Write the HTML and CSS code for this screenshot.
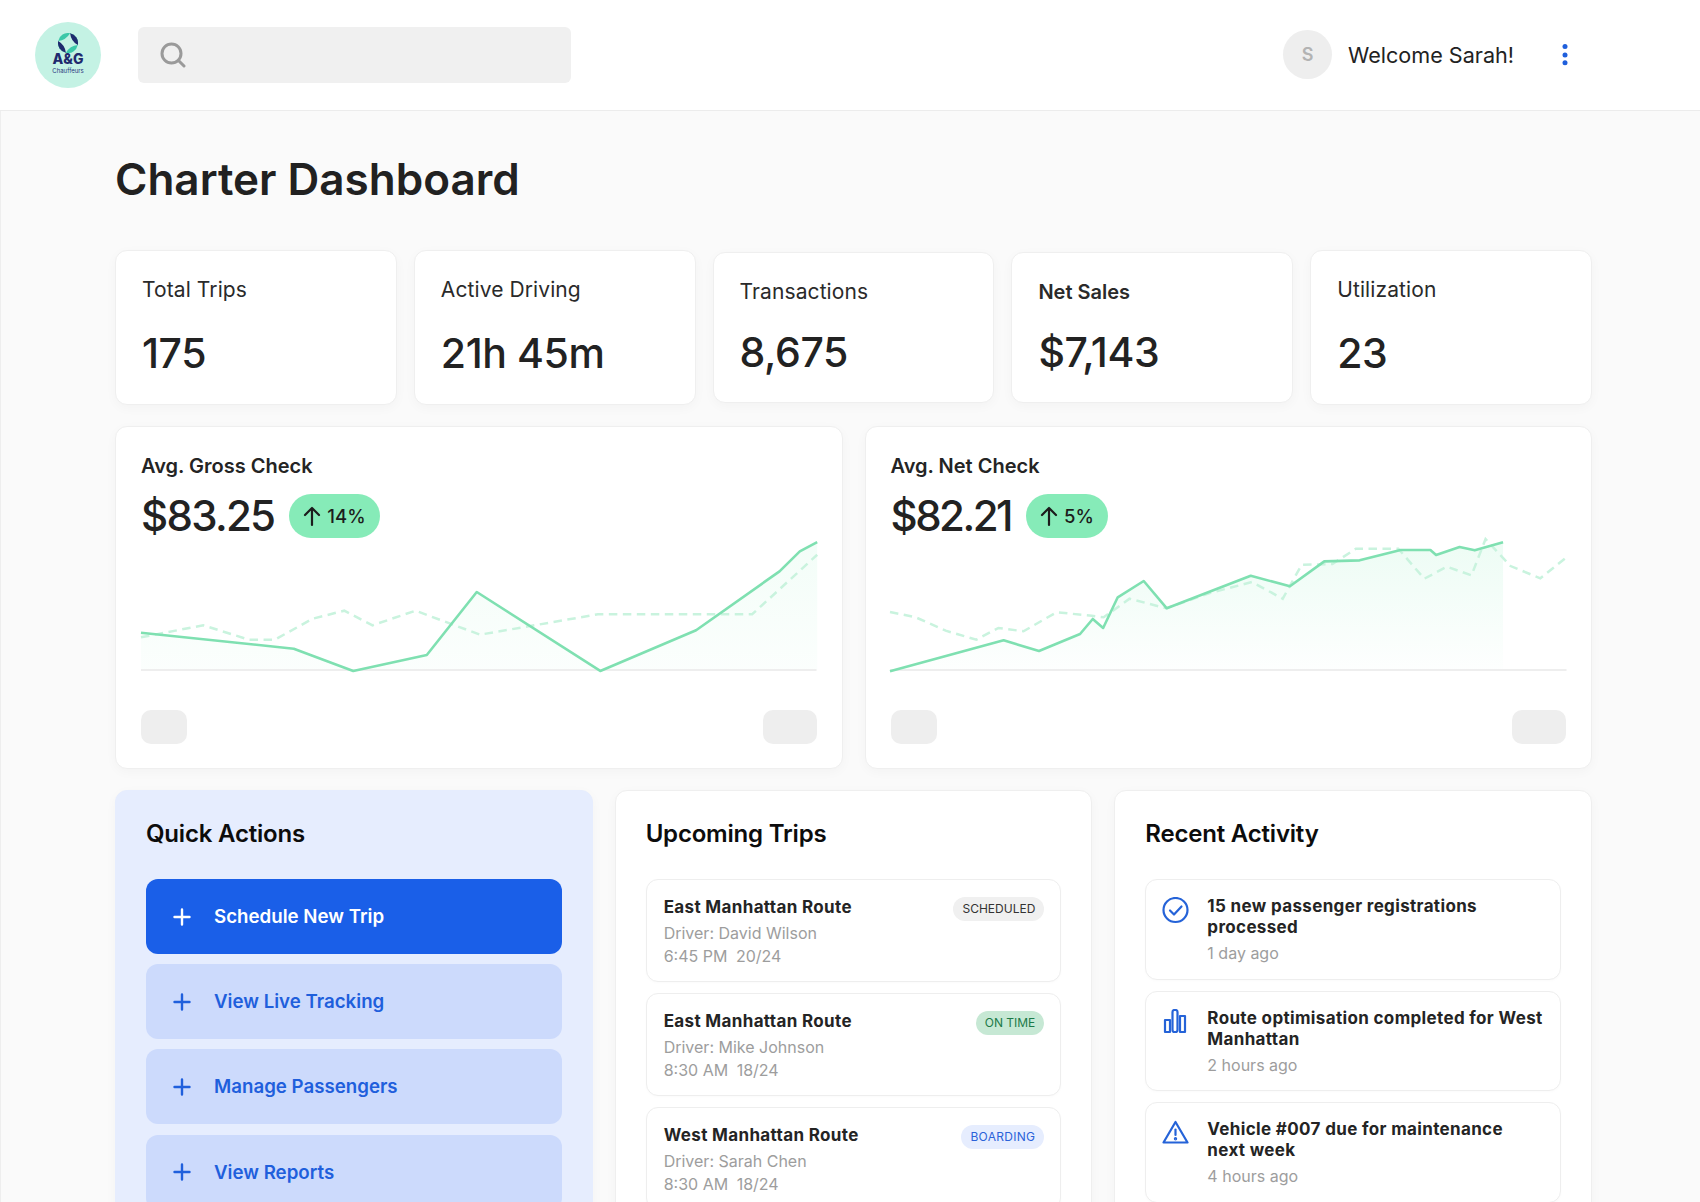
FILE: index.html
```html
<!DOCTYPE html>
<html lang="en">
<head>
<meta charset="utf-8">
<title>Charter Dashboard</title>
<link rel="stylesheet" href="styles.css">
</head>
<body>
<header class="topbar">
  <div class="logo">
    <svg class="logo-mark" viewBox="0 0 20 20" aria-hidden="true">
      <g transform="rotate(12 10 10)">
        <circle cx="10" cy="10" r="10" fill="#3cc8a8"/>
        <path d="M10 0A10 10 0 0 1 20 10H10Z" fill="#1f2a6e"/>
        <path d="M10 20A10 10 0 0 1 0 10H10Z" fill="#1f2a6e"/>
        <path d="M10 0Q12.500 7.500 20 10Q12.500 12.500 10 20Q7.500 12.500 0 10Q7.500 7.500 10 0Z" fill="#c4f2e4"/>
      </g>
    </svg>
    <span class="logo-name">A&amp;G</span>
    <span class="logo-sub">Chauffeurs</span>
  </div>
  <div class="search">
    <svg class="search-icon" viewBox="0 0 26 26" fill="none" stroke="#9a9a9a" stroke-width="3" stroke-linecap="round" aria-hidden="true"><circle cx="11.500" cy="11.500" r="9.500"/><path d="M18.500 18.500L24 24"/></svg>
  </div>
  <div class="user">
    <div class="avatar">S</div>
    <span class="welcome">Welcome Sarah!</span>
    <svg class="dots" viewBox="0 0 6 24" fill="#1f5fdc" aria-hidden="true"><circle cx="3" cy="3.500" r="2.500"/><circle cx="3" cy="12" r="2.500"/><circle cx="3" cy="19.800" r="2.500"/></svg>
  </div>
</header>

<main class="page">
  <h1 class="page-title">Charter Dashboard</h1>

  <section class="stats">
    <article class="stat"><div class="stat-label">Total Trips</div><div class="stat-value">175</div></article>
    <article class="stat"><div class="stat-label">Active Driving</div><div class="stat-value">21h 45m</div></article>
    <article class="stat stat-compact"><div class="stat-label">Transactions</div><div class="stat-value">8,675</div></article>
    <article class="stat stat-compact"><div class="stat-label stat-label-strong">Net Sales</div><div class="stat-value">$7,143</div></article>
    <article class="stat"><div class="stat-label">Utilization</div><div class="stat-value">23</div></article>
  </section>

  <section class="charts">
    <article class="chart-card">
      <div class="chart-label">Avg. Gross Check</div>
      <div class="chart-head">
        <span class="chart-value">$83.25</span>
        <span class="trend">
          <svg class="trend-arrow" viewBox="0 0 18 22" fill="none" stroke="#1c1c1c" stroke-width="2.200" stroke-linecap="round" stroke-linejoin="round" aria-hidden="true"><path d="M9 20V3M2 10l7-7 7 7"/></svg>14%
        </span>
      </div>
      <svg class="spark" viewBox="0 0 676 140" aria-hidden="true">
        <defs><linearGradient id="fadeA" x1="0" y1="0" x2="0" y2="1"><stop offset="0" stop-color="#86ebb8" stop-opacity=".1"/><stop offset="1" stop-color="#86ebb8" stop-opacity=".03"/></linearGradient></defs>
        <path d="M0 94.700L152.900 110.700L212.400 133L286 117L336 54L459.600 133L555.500 92.300L639 33.300L659.300 13.300L676.700 4V132H0Z" fill="url(#fadeA)"/>
        <path class="spark-base" d="M0 132H676"/>
        <path class="spark-dash" d="M0 99.300L62.300 87.300L108 101.700L134 101.700L171.800 80.700L203.400 72.700L231.700 87.300L274.700 72.700L339.300 96.700L457.300 76.300L611.600 76.300L676.700 16.700"/>
        <path class="spark-line" d="M0 94.700L152.900 110.700L212.400 133L286 117L336 54L459.600 133L555.500 92.300L639 33.300L659.300 13.300L676.700 4"/>
      </svg>
      <div class="chart-foot"><span class="skeleton skeleton-s"></span><span class="skeleton skeleton-l"></span></div>
    </article>

    <article class="chart-card">
      <div class="chart-label">Avg. Net Check</div>
      <div class="chart-head">
        <span class="chart-value chart-value-tight">$82.21</span>
        <span class="trend">
          <svg class="trend-arrow" viewBox="0 0 18 22" fill="none" stroke="#1c1c1c" stroke-width="2.200" stroke-linecap="round" stroke-linejoin="round" aria-hidden="true"><path d="M9 20V3M2 10l7-7 7 7"/></svg>5%
        </span>
      </div>
      <svg class="spark" viewBox="1 0 676 140" aria-hidden="true">
        <defs><linearGradient id="fadeB" x1="0" y1="0" x2="0" y2="1"><stop offset="0" stop-color="#86ebb8" stop-opacity=".15"/><stop offset="1" stop-color="#86ebb8" stop-opacity=".01"/></linearGradient></defs>
        <path d="M0 133.300L113.700 102.300L149.100 113L190.200 96L202.900 81L213.300 90L227.900 59.300L253.900 43L277 70.300L361 37.700L400.200 48.300L434.600 23.300L470 22.300L511 12L540.800 12L546.500 17L570 9L585.200 12.300L613.500 4.300V132H0Z" fill="url(#fadeB)"/>
        <path class="spark-base" d="M0 132H677"/>
        <path class="spark-dash" d="M0 74L25 79L55.700 92.700L86.400 101.700L108.500 90L133.600 93.300L166.600 74.300L202 77.700L213.800 79.300L239.700 60.700L276.500 70.300L320 55L362.300 44L393 60.700L412 26.700L442.700 26L466.200 10.700L508.700 10.700L534.700 40.700L557.300 28.700L581.900 37.300L596 1L621 28L650.800 40.300L677 19.300"/>
        <path class="spark-line" d="M0 133.300L113.700 102.300L149.100 113L190.200 96L202.900 81L213.300 90L227.900 59.300L253.900 43L277 70.300L361 37.700L400.200 48.300L434.600 23.300L470 22.300L511 12L540.800 12L546.500 17L570 9L585.200 12.300L613.500 4.300"/>
      </svg>
      <div class="chart-foot"><span class="skeleton skeleton-s"></span><span class="skeleton skeleton-l"></span></div>
    </article>
  </section>

  <section class="panels">
    <article class="panel panel-actions">
      <h2 class="panel-title">Quick Actions</h2>
      <div class="action-list">
        <div class="action action-primary"><svg class="plus" viewBox="0 0 18 18" aria-hidden="true"><path d="M9 1.500V16.500M1.500 9H16.500"/></svg>Schedule New Trip</div>
        <div class="action"><svg class="plus" viewBox="0 0 18 18" aria-hidden="true"><path d="M9 1.500V16.500M1.500 9H16.500"/></svg>View Live Tracking</div>
        <div class="action"><svg class="plus" viewBox="0 0 18 18" aria-hidden="true"><path d="M9 1.500V16.500M1.500 9H16.500"/></svg>Manage Passengers</div>
        <div class="action"><svg class="plus" viewBox="0 0 18 18" aria-hidden="true"><path d="M9 1.500V16.500M1.500 9H16.500"/></svg>View Reports</div>
      </div>
    </article>

    <article class="panel">
      <h2 class="panel-title">Upcoming Trips</h2>
      <div class="item-list">
        <div class="trip">
          <div class="trip-body"><div class="item-title">East Manhattan Route</div><div class="item-meta">Driver: David Wilson</div><div class="item-meta">6:45 PM <span class="seats">20/24</span></div></div>
          <span class="badge badge-grey">SCHEDULED</span>
        </div>
        <div class="trip">
          <div class="trip-body"><div class="item-title">East Manhattan Route</div><div class="item-meta">Driver: Mike Johnson</div><div class="item-meta">8:30 AM <span class="seats">18/24</span></div></div>
          <span class="badge badge-green">ON TIME</span>
        </div>
        <div class="trip">
          <div class="trip-body"><div class="item-title">West Manhattan Route</div><div class="item-meta">Driver: Sarah Chen</div><div class="item-meta">8:30 AM <span class="seats">18/24</span></div></div>
          <span class="badge badge-blue">BOARDING</span>
        </div>
      </div>
    </article>

    <article class="panel">
      <h2 class="panel-title">Recent Activity</h2>
      <div class="item-list">
        <div class="activity">
          <svg class="activity-icon" viewBox="0 0 27 27" aria-hidden="true"><circle cx="13.500" cy="13" r="12"/><path d="M8 13.500l4 4 7.500-8"/></svg>
          <div><div class="item-title">15 new passenger registrations processed</div><div class="item-meta activity-time">1 day ago</div></div>
        </div>
        <div class="activity">
          <svg class="activity-icon" viewBox="0 0 27 27" aria-hidden="true"><rect x="3" y="11" width="5" height="12"/><rect x="10.500" y="1" width="5" height="22" rx="2"/><rect x="18" y="7" width="5" height="16"/></svg>
          <div><div class="item-title">Route optimisation completed for West Manhattan</div><div class="item-meta activity-time">2 hours ago</div></div>
        </div>
        <div class="activity">
          <svg class="activity-icon" viewBox="0 0 27 27" aria-hidden="true"><path d="M13.500 2L25.500 22.500H1.500Z"/><path d="M13.500 9.500V15"/><circle class="icon-dot" cx="13.500" cy="18.700" r=".6"/></svg>
          <div><div class="item-title">Vehicle #007 due for maintenance<br>next week</div><div class="item-meta activity-time">4 hours ago</div></div>
        </div>
      </div>
    </article>
  </section>
</main>
</body>
</html>
```

FILE: styles.css
```css
* { box-sizing: border-box; }
html, body { margin: 0; height: 1202px; overflow: hidden; }
body { font-family: Inter, "Liberation Sans", sans-serif; color: #1f1f1f; background: #fff; }

.topbar { height: 111px; display: flex; align-items: center; padding: 0 132px 1px 35px; background: #fff; border-bottom: 1px solid #ececec; }
.logo { width: 66px; height: 66px; border-radius: 50%; background: #c4f2e4; display: flex; flex-direction: column; align-items: center; padding-top: 11px; flex: none; }
.logo-mark { width: 20px; height: 20px; display: block; }
.logo-name { font-size: 14px; line-height: 14px; font-weight: 800; color: #1f2a6e; margin-top: -1px; }
.logo-sub { font-size: 6px; line-height: 8px; color: #2a3580; margin-top: 1px; }
.search { width: 433px; height: 56px; margin-left: 37px; background: #f0f0f0; border-radius: 6px; display: flex; align-items: center; padding-left: 22px; }
.search-icon { width: 26px; height: 26px; display: block; }
.user { margin-left: auto; display: flex; align-items: center; }
.avatar { width: 49px; height: 49px; border-radius: 50%; background: #eeeeee; color: #b3b3b3; font-size: 18px; font-weight: 600; display: flex; align-items: center; justify-content: center; }
.welcome { margin-left: 16px; font-size: 21.600px; line-height: 30px; color: #222; width: 214px; }
.dots { width: 6px; height: 24px; display: block; }

.page { height: 1091px; overflow: hidden; background: #fafafa; border-left: 1px solid #eeeeee; padding: 0 108px 0 114px; }
.page-title { margin: 0; padding-top: 42px; font-size: 44px; line-height: 52px; font-weight: 600; color: #212121; height: 139px; }

.stats { display: grid; grid-template-columns: repeat(5, 1fr); gap: 17px; align-items: center; }
.stat { height: 155px; padding: 24px 26px; background: #fff; border: 1px solid #efefef; border-radius: 12px; box-shadow: 0 3px 12px rgba(0, 0, 0, .03); }
.stat-label { font-size: 21px; line-height: 30px; color: #2a2a2a; letter-spacing: .1px; }
.stat-label-strong { font-size: 20px; font-weight: 600; letter-spacing: 0; }
.stat-value { margin-top: 22px; font-size: 41px; line-height: 52px; font-weight: 500; color: #222; letter-spacing: -.4px; }
.stat-compact { height: 151px; }
.stat-compact .stat-value { margin-top: 19px; }

.charts { display: grid; grid-template-columns: 1fr 1fr; gap: 22px; margin-top: 21px; }
.chart-card { height: 343px; padding: 25px 25px 24px; background: #fff; border: 1px solid #efefef; border-radius: 12px; box-shadow: 0 3px 12px rgba(0, 0, 0, .03); }
.chart-label { font-size: 20px; line-height: 28px; font-weight: 600; color: #242424; }
.chart-head { display: flex; align-items: center; gap: 15px; margin-top: 14px; height: 44px; }
.chart-value { font-size: 42px; line-height: 44px; font-weight: 500; color: #222; letter-spacing: -1.700px; }
.chart-value-tight { letter-spacing: -2.500px; }
.trend { height: 44px; padding: 0 14px; border-radius: 22px; background: #86ebb8; display: flex; align-items: center; gap: 6px; font-size: 18.500px; font-weight: 500; color: #1c1c1c; }
.trend-arrow { width: 18px; height: 22px; display: block; }
.spark { display: block; width: 100%; height: 140px; overflow: visible; fill: none; }
.spark-base { stroke: #eeeeee; stroke-width: 2; fill: none; }
.spark-line { stroke: #7fe0b1; stroke-width: 2.600; fill: none; stroke-linejoin: round; }
.spark-dash { stroke: #c9f3de; stroke-width: 2.500; fill: none; stroke-dasharray: 8.500 5.500; }
.chart-foot { display: flex; justify-content: space-between; margin-top: 32px; }
.skeleton { display: block; height: 34px; border-radius: 10px; background: #eeeeee; }
.skeleton-s { width: 46px; }
.skeleton-l { width: 54px; }

.panels { display: grid; grid-template-columns: repeat(3, 1fr); gap: 22px; margin-top: 21px; }
.panel { height: 480px; padding: 26px 30px; background: #fff; border: 1px solid #efefef; border-radius: 12px; box-shadow: 0 3px 12px rgba(0, 0, 0, .03); }
.panel-actions { background: #e6edfe; border-color: #e6edfe; }
.panel-title { margin: 0 0 28px; font-size: 24px; line-height: 34px; font-weight: 600; color: #0c0c0c; letter-spacing: -.2px; }

.action-list { display: flex; flex-direction: column; gap: 10.200px; }
.action { height: 75px; display: flex; align-items: center; gap: 23px; padding-left: 27px; border-radius: 12px; background: #ccdafc; color: #1f5fdc; font-size: 18.700px; font-weight: 600; }
.action-primary { background: #1a5fe8; color: #fff; }
.plus { width: 18px; height: 18px; display: block; stroke: currentColor; stroke-width: 2.400; stroke-linecap: round; fill: none; }

.item-list { display: flex; flex-direction: column; gap: 11px; }
.trip { height: 103px; display: flex; justify-content: space-between; align-items: flex-start; padding: 16px 16px 13px 17px; background: #fff; border: 1px solid #eeeeee; border-radius: 12px; box-shadow: 0 1px 3px rgba(0, 0, 0, .02); }
.item-title { font-size: 17px; line-height: 21px; font-weight: 700; color: #242424; letter-spacing: .35px; }
.trip .item-title { line-height: 22px; margin-bottom: 4px; }
.item-meta { font-size: 16px; line-height: 23px; color: #9d9d9d; }
.seats { margin-left: 4px; }
.badge { height: 24px; margin-top: 1px; padding: 0 9px; border-radius: 12px; font-size: 12px; line-height: 24px; }
.badge-grey { background: #f0f0f0; color: #333; }
.badge-green { background: #c6e8d4; color: #1c7a48; }
.badge-blue { background: #e6edfe; color: #2b62d9; letter-spacing: .3px; }

.activity { height: 100.500px; display: flex; gap: 18px; padding: 16px 10px 13px 16px; background: #fff; border: 1px solid #eeeeee; border-radius: 12px; box-shadow: 0 1px 3px rgba(0, 0, 0, .02); }
.activity-icon { width: 27px; height: 27px; flex: none; margin-top: 1px; fill: none; stroke: #2563d8; stroke-width: 2.200; stroke-linecap: round; stroke-linejoin: round; }
.activity-time { margin-top: 4px; }
.icon-dot { fill: #2563d8; }
```
